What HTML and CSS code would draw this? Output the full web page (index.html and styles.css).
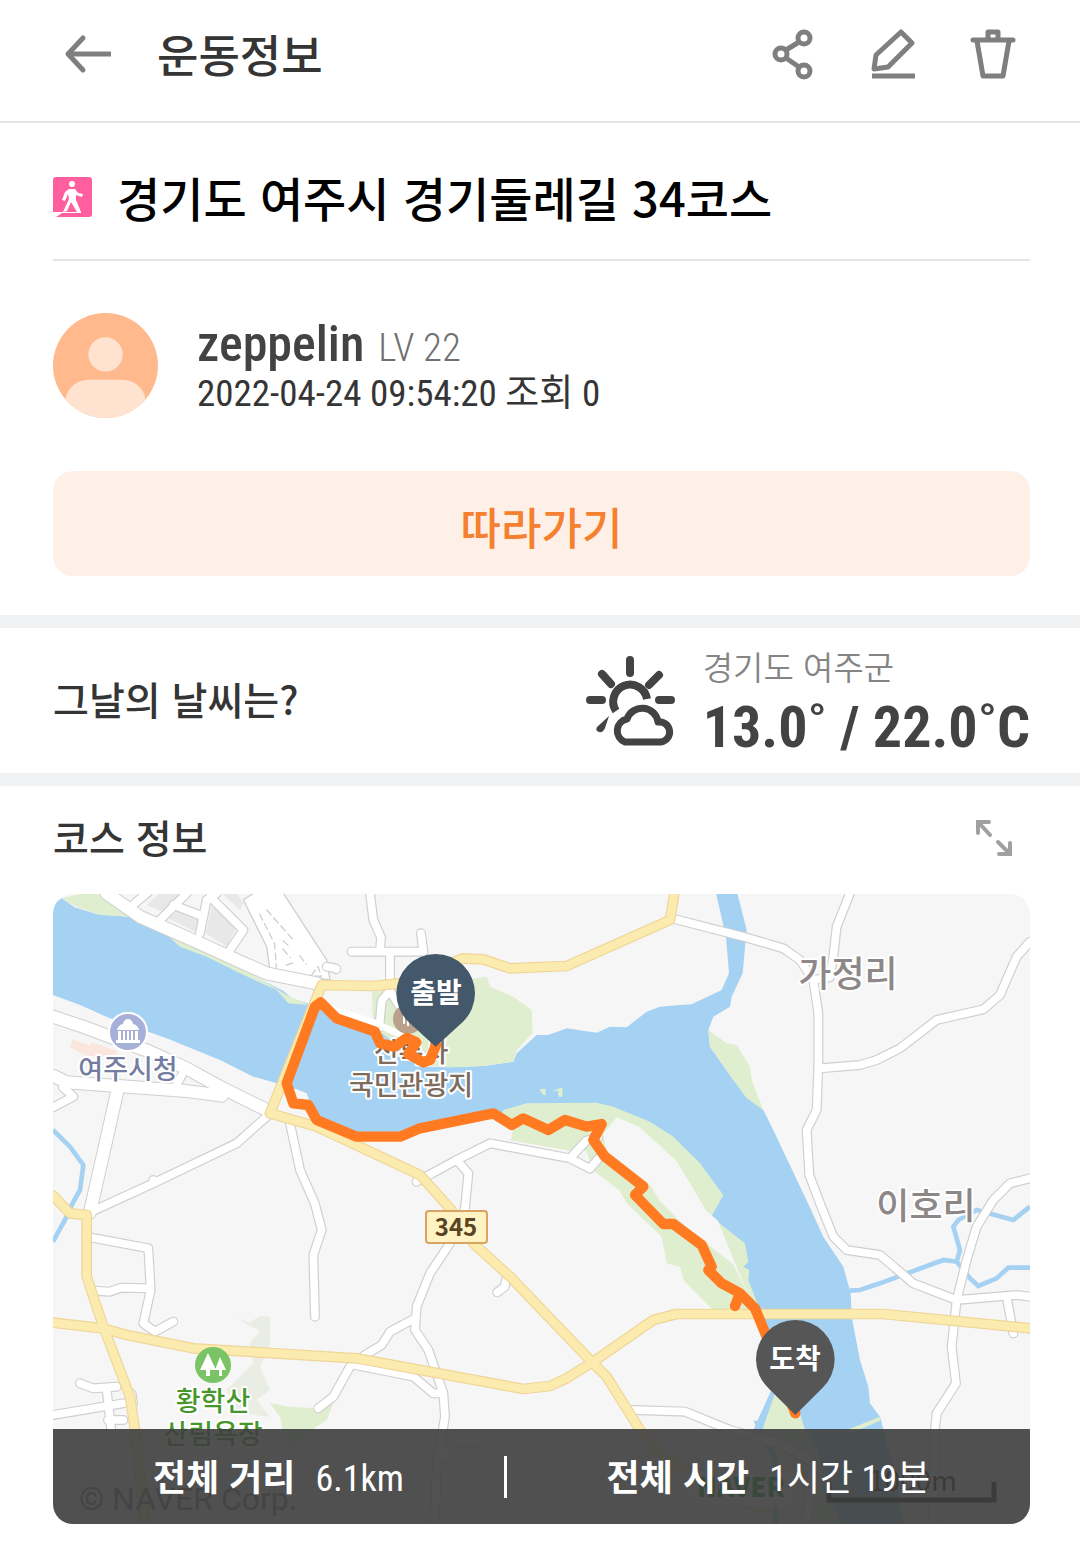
FILE: index.html
```html
<!DOCTYPE html>
<html lang="ko">
<head>
<meta charset="utf-8">
<meta name="viewport" content="width=device-width, initial-scale=1">
<title>운동정보</title>
<link rel="stylesheet" href="styles.css">
</head>
<body>
<header class="topbar">
  <button class="icon-btn" type="button" aria-label="뒤로">
    <svg width="52" height="48" viewBox="0 0 52 48" fill="none" stroke="#7f7f7f" stroke-width="5"><path d="M50 24H7"/><path d="M22 8 7 24l15 16" stroke-linecap="round" stroke-linejoin="round"/></svg>
  </button>
  <h1 class="topbar-title">운동정보</h1>
  <div class="actions">
    <button class="icon-btn" type="button" aria-label="공유">
      <svg width="52" height="56" viewBox="0 0 52 56" fill="none" stroke="#7f7f7f" stroke-width="5"><circle cx="14" cy="28" r="6"/><circle cx="37" cy="12" r="6"/><circle cx="37" cy="45" r="6"/><path d="m19 24 13-8M19 32l13 9"/></svg>
    </button>
    <button class="icon-btn" type="button" aria-label="편집">
      <svg width="52" height="56" viewBox="0 0 52 56" fill="none" stroke="#7f7f7f" stroke-width="5" stroke-linejoin="round"><path d="M34 6 45 17 21 41 7 43 9 29Z"/><path d="M5 50h43"/></svg>
    </button>
    <button class="icon-btn" type="button" aria-label="삭제">
      <svg width="52" height="56" viewBox="0 0 52 56" fill="none" stroke="#7f7f7f" stroke-width="5" stroke-linejoin="round"><path d="M6 14h40" stroke-linecap="round"/><path d="M21 14V6h10v8"/><path d="m10 15 6 35h20l6-35"/></svg>
    </button>
  </div>
</header>

<main>
  <section class="summary">
    <div class="course-title">
      <svg width="40" height="42" viewBox="0 0 40 42"><rect x="0" y="1" width="39" height="40" rx="3" fill="#ff5f9f"/><path d="M0 36h28v1H9l-6 4H0z" fill="#fff"/><circle cx="19" cy="8" r="3" fill="#fff"/><path d="M16 13h6l3 4 5 1-1 3-6-2v5l5 12h-4l-6-10-4 9-4 1 6-13-1-5-3 7-3-1 3-8z" fill="#fff"/></svg>
      <h2>경기도 여주시 경기둘레길 34코스</h2>
    </div>
    <div class="profile">
      <svg class="avatar" viewBox="0 0 104 104"><defs><clipPath id="face"><circle cx="52" cy="52" r="52"/></clipPath></defs><g clip-path="url(#face)"><rect width="104" height="104" fill="#ffb98d"/><circle cx="52" cy="41" r="17" fill="#ffe2d0"/><rect x="12" y="66" width="80" height="60" rx="23" fill="#ffe2d0"/></g></svg>
      <div>
        <p class="who"><span class="name">zeppelin</span><span class="level">LV 22</span></p>
        <p class="meta">2022-04-24 09:54:20 조회 0</p>
      </div>
    </div>
    <button class="follow" type="button">따라가기</button>
  </section>

  <section class="weather">
    <h3>그날의 날씨는?</h3>
    <svg class="weather-icon" width="92" height="92" viewBox="0 0 92 92" fill="none" stroke="#434343" stroke-width="8" stroke-linecap="round"><path d="M45 5v13M17 19l9 10M74 20 64 30M5 45h12M74 45h12"/><path d="M31 56a17 17 0 1 1 31-12" stroke-linecap="butt"/><path d="M40 87a12 12 0 0 1 2-23 16 16 0 0 1 31 3 10 10 0 0 1 3 20Z" stroke-width="7" stroke-linejoin="round"/><path d="M24 61 12 72q-2 4 2 5t6-4z" fill="#434343" stroke="none"/></svg>
    <div class="weather-text">
      <p class="place">경기도 여주군</p>
      <p class="temp">13.0˚ / 22.0˚C</p>
    </div>
  </section>

  <section class="course">
    <div class="course-head">
      <h3>코스 정보</h3>
      <button class="icon-btn" type="button" aria-label="지도 확대">
        <svg width="36" height="40" viewBox="0 0 36 40" fill="none" stroke="#a0a0a0" stroke-width="4" stroke-linecap="round"><path d="M2 13V2h11M3 3l11 12M23 34h11V23M33 33 22 22"/></svg>
      </button>
    </div>
    <div class="map">
      <svg class="map-svg" viewBox="0 0 977 630" role="img" aria-label="코스 지도">
        <defs>
          <g id="wide">
            <path d="M0 368 90 398 290 473 400 523 500 578 641 648"/>
            <path d="M0 545 41 565 391 590 506 605"/>
            <path d="M196 578 111 955"/>
            <path d="M161-2 261 68 441 148 561 203 641 238 791 268"/>
          </g>
          <g id="roads">
            <path d="M641 668 551 748 301 868 111 955M301 868V858"/>
            <path d="M0 640 61 608 30 580"/>
            <path d="M711 688 741 828 786 930 806 1008 781 1083 786 1268"/>
            <path d="M391 535 365 583"/>
            <path d="M951-2 961 78 984 130 981 172M896 173H1111L1104 118M1011 173V290L986 320 979 400M1011 290 1060 370"/>
            <path d="M821 218 844 222 850 225"/>
            <path d="M225 45 285-5M321 78 401-2M361 33 451 68M441 118 461 18 491-2M471 8 571 108 531 168"/>
            <path d="M1864 75 2071 128 2191 163 2241 198 2281 258 2296 358V518L2291 648 2261 708 2269 843 2301 928 2341 1028 2381 1068 2481 1083 2581 1168 2711 1218 2891 1203 2931 1208"/>
            <path d="M2391-2 2351 98 2341 188 2330 250 2281 258"/>
            <path d="M2301 523 2421 513 2471 498 2541 463 2651 378 2791 346 2841 303 2891 188 2931 143"/>
            <path d="M2931 853 2871 868 2821 918 2771 998 2741 1098 2711 1218 2696 1358 2709 1468 2651 1558 2646 1608 2641 1890"/>
            <path d="M2861 1208 2881 1318"/>
            <path d="M1741 1548 1896 1553 2031 1608 2181 1648 2281 1708 2260 1890"/>
            <path d="M1091 863 1211 798 1311 748 1551 793 1611 824 1635 795M1551 793 1600 740 1635 730"/>
            <path d="M1211 798 1246 838 1236 943 1191 1048 1131 1138 1091 1238 1086 1308 1126 1368 1171 1498 1176 1568 1151 1718 1146 1890"/>
            <path d="M1086 1273 1011 1313 986 1353 936 1383 891 1418 841 1508 796 1543"/>
            <path d="M901 1412 1081 1448 1141 1498 1171 1498"/>
            <path d="M1361 1150 1355 1178 1333 1195M1170 1690 1200 1650 1290 1640"/>
            <path d="M101 1028 286 1063 293 1188 271 1288 306 1313 361 1283M293 1183 205 1181 170 1193 121 1190"/>
            <path d="M0 1563 211 1528M81 1468 121 1483 191 1478M161 1488 176 1618M165 1578H211M240 1530 236 1500"/>
          </g>
          <g id="highways">
            <path d="M651 658 806 273 961 276 1041 268 1231 193 1291 196 1371 223 1541 216 1851 78 1864-2"/>
            <path d="M651 658 791 698 1101 843 1191 943 1261 1048 1371 1148 1611 1398 1661 1448 1761 1608 1821 1678 1881 1718 2121 1848"/>
            <path d="M0 905 51 958 101 963V1148L151 1298 231 1508 246 1608 276 1890"/>
            <path d="M-20 1284 151 1303 221 1323 421 1363 911 1393 1411 1485 1491 1476 1541 1453 1621 1403 1801 1278 1871 1260H2491L2951 1305"/>
          </g>
        </defs>
        <rect width="977" height="630" fill="#f6f6f6"/>
        <g transform="scale(.33333)">
          <g fill="#a5d2f3">
            <path d="M0 30 26 13 65 40 130 60 230 68 300 100 340 115 420 160 500 195 600 245 690 290 720 315 780 333 851 343 961 388 1061 468 1111 518 1191 520 1291 516 1381 503 1391 478 1451 423 1486 423 1541 403 1631 416 1671 398 1721 400 1781 353 1821 338 1881 333 1916 331 2006 288 2028 238 2019 128 1989-2H2053L2081 108 2069 238 2036 308 2031 338 1981 368 1966 408 1971 458 2041 558 2131 648 2151 688 2266 930 2311 1028 2371 1118 2393 1198 2396 1268 2421 1398 2446 1478 2451 1528 2481 1568 2521 1718 2551 1890H2361L2291 1658 2101 1608 2155 1488 2160 1450 2121 1248 1976 966 1941 808 1681 700 1321 660 1101 703 1041 728H911L791 673 761 598 731 586 671 568 601 548 501 498 341 433 171 373 81 333 0 303Z"/>
            <path d="M2140 1580H2101L2160 1700V1890H2175V1700Z"/>
          </g>
          <g fill="#dfeecf">
            <path d="M26 13 90-2H175L236 53 226 68 141 63 71 38Z"/>
            <path d="M281 83 361 123 461 173 601 243 701 303 766 333 706 328 671 288 561 238 461 188 381 158 331 113Z"/>
            <path d="M956 293 1301 248 1311 278 1381 308 1436 348 1439 418 1391 468 1381 503 1291 516 1191 520 1111 515 961 398Z"/>
            <path d="M1966 408 2021 448 2051 453 2091 518 2096 558 2131 648 2081 613 2041 558 1971 458Z"/>
            <path d="M1351 648 1421 628 1631 626 1681 638 1791 683 1861 728 1941 808 2011 903 1976 966 2006 993 2076 1048 2086 1103 2071 1118 2089 1128 2086 1158 2121 1248H1981L1941 1208 1891 1158 1881 1118 1841 1108 1826 1028 1721 928 1700 890 1620 828 1600 770 1550 770 1371 738 1340 690Z"/>
            <path d="M2166 1498 2211 1518 2241 1558 2256 1608 2291 1658 2361 1890H2290L2220 1700 2131 1640 2128 1608Z"/>
            <path d="M2381 1608 2481 1568V1580L2400 1615Z"/>
            <path d="M651 1528 711 1538 791 1543 841 1528 821 1578 761 1618 701 1678 681 1568Z"/>
            <path d="M1460 585h18v20l-10-5zM1500 590l28-10v28h-12v-18z"/>
          </g>
          <path d="M551 1273 590 1285 621 1266 651 1268V1358L621 1418 651 1488 611 1518 651 1568 561 1558 521 1488 551 1458 601 1408 591 1348 621 1310 580 1290Z" fill="#e9ede3"/>
          <path d="M1691 670 1760 700 1870 800 1900 850 1960 950 1995 980 2035 1080 2085 1200 2040 1110 1900 1000 1820 920 1790 870 1660 770 1650 720ZM1040 728 1110 705 1330 665 1380 700 1375 735 1300 760H1040Z" fill="#f6f6f6"/>
          <path d="M281 33 321-2H391L331 53ZM346 73 386 38 441 63 426 113ZM481 18 551 98 521 158 458 118ZM506-2 561 48 571 28 551-2Z" fill="#e8e8e8"/>
          <path d="M51 460 60 435 110 455 115 445 190 470V490L100 485Z" fill="#fae6dc"/>
          <g fill="none" stroke="#a5d2f3" stroke-width="14">
            <path d="M0 708 51 758 91 813 81 888 55 935 41 968 0 1043"/>
            <path d="M2390 1190 2421 1188 2481 1168 2671 1098 2711 1103 2751 1153 2776 1176 2831 1153 2866 1121H2931M2711 1103 2721 1068 2701 998 2716 978 2771 948 2881 978 2931 938"/>
          </g>
          <path d="M571 18 601-2H691L821 198 831 258 651 228 641 158Z" fill="#fff" stroke="#cfcfcf" stroke-width="4"/>
          <g fill="none" stroke-linecap="round" stroke-linejoin="round">
            <use href="#wide" class="wide-edge"/><use href="#roads" class="road-edge"/>
            <use href="#wide" class="wide-fill"/><use href="#roads" class="road-fill"/>
            <path d="M831 343 961 385 1060 430" stroke="#fff" stroke-width="20"/>
            <path d="M641 48l80 90M620 60l45 90 5 70M690 140l20 18M690 165l22 26M740 185l20 26M700 213l20-6M775 245l20-28 10 30z" stroke="#cfcfcf" stroke-width="4" stroke-dasharray="20 12"/>
            <use href="#highways" class="highway-edge"/><use href="#highways" class="highway-fill"/>
          </g>
        </g>

        <circle cx="355" cy="125" r="15" fill="#b9a18c"/><path d="M351 120v10M355 118v14" stroke="#fff" stroke-width="2"/>
        <circle cx="75" cy="138" r="19" fill="#a7b0d8" stroke="#fff" stroke-width="2"/>
        <path d="M64 136h22q-1-5-6-6-1-5-5-5t-5 5q-5 1-6 6zM63 146h24v3H63zM65 137h3v9h-3zM70 137h2v9h-2zM74 137h2v9h-2zM78 137h2v9h-2zM82 137h3v9h-3z" fill="#fff"/>
        <circle cx="160" cy="471" r="18" fill="#7ac465"/>
        <path d="m155 459 8 17h-6v6h-4v-6h-6zM167 463l6 13h-4v6h-3v-6h-4z" fill="#fff"/>
        <g class="label">
          <text class="small" x="75" y="185" fill="#747da0">여주시청</text>
          <text class="small" x="358" y="168" fill="#7d6b5c">신륵사</text>
          <text class="small" x="358" y="201" fill="#7d6b5c">국민관광지</text>
          <text class="big" x="795" y="93" fill="#8d8787">가정리</text>
          <text class="big" x="873" y="325" fill="#8d8787">이호리</text>
          <text class="small" x="160" y="517" fill="#46962b">황학산</text>
          <text class="small" x="160" y="550" fill="#46962b">산림욕장</text>
        </g>
        <rect x="373" y="317" width="61" height="32" rx="3" fill="#fff3c4" stroke="#d9a463" stroke-width="2"/>
        <text class="route-no" x="403" y="342">345</text>
        <text class="copyright" x="26" y="616">© NAVER Corp.</text>
        <rect x="633" y="576" width="112" height="36" rx="18" fill="#fff"/>
        <text class="brand" x="688" y="603">NAVER</text>
        <text class="scale" x="860" y="597">1000m</text>
        <path d="M776 588v18h165v-18" fill="none" stroke="#222" stroke-width="5"/>

        <g transform="scale(.33333)">
          <path d="M1149 453 1131 498 1111 505 1066 480 1090 445 1061 432 1025 458 981 448 966 413 851 373 803 325 786 338 701 568 721 628 766 633 791 678 911 728H1041L1101 703 1321 658 1376 693 1411 673 1486 708 1536 678 1601 698 1646 690 1621 738 1656 788 1771 878 1746 903 1831 990H1861L1946 1053 1976 1118 1966 1128 2006 1168 2061 1198 2046 1236 2061 1198 2106 1243 2141 1328 2227 1558" fill="none" stroke="#ff7a21" stroke-width="31" stroke-linecap="round" stroke-linejoin="round"/>
          <path d="M1148 458 1066 383A118 118 0 1 1 1230 383Z" fill="#44586b"/>
          <path d="M2227 1563 2145 1481A118 118 0 1 1 2309 1481Z" fill="#565656"/>
        </g>
        <text class="pin" x="383" y="109">출발</text>
        <text class="pin" x="742" y="475">도착</text>
      </svg>
      <dl class="stats">
        <div class="stat"><dt>전체 거리</dt><dd>6.1km</dd></div>
        <div class="stat-rule"></div>
        <div class="stat"><dt>전체 시간</dt><dd>1시간 19분</dd></div>
      </dl>
    </div>
  </section>
</main>
</body>
</html>
```
FILE: styles.css
```css
* { box-sizing: border-box; }
body {
  margin: 0;
  background: #fff;
  color: #353535;
  font-family: "Noto Sans CJK KR", "Noto Sans", sans-serif;
}
h1, h2, h3, p, dl, dd { margin: 0; }
button { border: 0; background: none; font-family: inherit; cursor: pointer; }
svg { display: block; }

.topbar {
  display: flex;
  align-items: center;
  min-height: 123px;
  padding: 0 61px 14px;
  border-bottom: 2px solid #e5e5e5;
}
.icon-btn { padding: 0; }
.topbar-title { margin-left: 44px; font-size: 45px; line-height: 60px; font-weight: 500; }
.actions { display: flex; gap: 48px; margin-left: auto; }

.summary { padding: 0 50px 39px 53px; }
.course-title {
  display: flex;
  align-items: center;
  gap: 24px;
  min-height: 138px;
  padding-top: 12px;
  border-bottom: 2px solid #e5e5e5;
}
.course-title h2 { color: #000; font-size: 47px; line-height: 64px; font-weight: 500; }

.profile { display: flex; align-items: center; gap: 39px; padding: 52px 0 53px; }
.avatar { width: 105px; height: 105px; }
.who, .meta { font-family: "Roboto Condensed", "Liberation Sans Narrow", "Noto Sans CJK KR", sans-serif; }
.who { display: flex; align-items: baseline; gap: 14px; padding-top: 4px; line-height: 48px; }
.name { color: #434343; font-size: 50px; font-weight: 500; }
.level { color: #707070; font-size: 39px; font-weight: 300; }
.meta { font-size: 37px; line-height: 44px; }

.follow {
  display: block;
  width: 100%;
  padding: 23px 0 17px;
  border-radius: 20px;
  background: #fff0e7;
  color: #f58030;
  font-size: 44px;
  line-height: 65px;
  font-weight: 500;
}

.weather {
  display: flex;
  align-items: center;
  min-height: 171px;
  padding: 0 50px 0 53px;
  border: solid #f1f2f4;
  border-width: 13px 0;
}
.weather h3, .course h3 { padding-bottom: 6px; font-size: 39px; line-height: 52px; font-weight: 500; }
.weather-icon { margin: 0 26px 0 auto; }
.weather-text { padding-top: 6px; }
.place { color: #858585; font-size: 33px; line-height: 46px; font-weight: 350; }
.temp { color: #434343; font-size: 58px; line-height: 76px; font-weight: 700; font-family: "Roboto Condensed", "Noto Sans CJK KR", sans-serif; }

.course { padding: 24px 50px 32px 53px; }
.course h3 { padding-bottom: 8px; }
.course-head { display: flex; align-items: center; justify-content: space-between; padding: 0 18px 24px 0; }

.map { position: relative; overflow: hidden; border-radius: 20px; }
.map-svg { width: 100%; height: auto; }
.wide-edge { stroke: #cfcfcf; stroke-width: 42px; }
.wide-fill { stroke: #fff; stroke-width: 36px; }
.road-edge { stroke: #cfcfcf; stroke-width: 30px; }
.road-fill { stroke: #fff; stroke-width: 23px; }
.highway-edge { stroke: #efd597; stroke-width: 32px; }
.highway-fill { stroke: #fcebae; stroke-width: 25px; }
.label { text-anchor: middle; font-weight: 500; paint-order: stroke; stroke: #fff; stroke-width: 4px; stroke-linejoin: round; }
.small { font-size: 27px; }
.big { font-size: 36px; }
.route-no { text-anchor: middle; font-size: 24px; font-weight: 700; fill: #5b4423; }
.copyright { font-family: Roboto, sans-serif; font-size: 32px; fill: #777; }
.brand { text-anchor: middle; font-size: 26px; font-weight: 900; fill: #03a13a; }
.scale { text-anchor: middle; font-size: 28px; fill: #222; }
.pin { text-anchor: middle; font-size: 28px; font-weight: 700; fill: #fff; }

.stats {
  position: absolute;
  inset: auto 0 0;
  display: flex;
  align-items: center;
  justify-content: space-evenly;
  height: 95px;
  background: rgba(62, 62, 62, .9);
  color: #fff;
}
.stat { display: flex; align-items: baseline; gap: 20px; font-size: 36px; line-height: 52px; }
.stat dt { font-weight: 700; }
.stat dd { font-size: 36px; font-family: "Roboto Condensed", "Noto Sans CJK KR", sans-serif; }
.stat-rule { width: 3px; height: 42px; background: #fff; }
```
